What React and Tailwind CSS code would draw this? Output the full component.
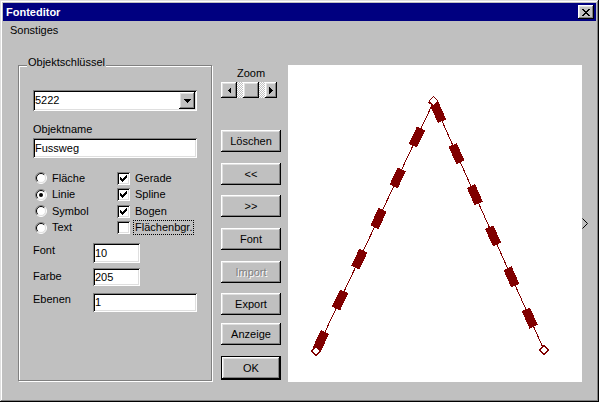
const FONT = "[font-family:'Liberation_Sans',Arial,sans-serif] text-[11px] leading-[13px] text-black";
const RAISED = "shadow-[inset_-1px_-1px_#000,inset_1px_1px_#fff,inset_-2px_-2px_#808080,inset_2px_2px_#dfdfdf]";
const SUNKEN = "shadow-[inset_1px_1px_#808080,inset_-1px_-1px_#fff,inset_2px_2px_#000,inset_-2px_-2px_#dfdfdf]";
const CHECKER = "[background-image:repeating-conic-gradient(#fff_0_25%,#c0c0c0_0_50%)] [background-size:2px_2px]";

const X_ROWS = ['XX....XX', '.XX..XX.', '..XXXX..', '...XX...', '..XXXX..', '.XX..XX.', 'XX....XX'];

function CloseGlyph() {
  return (
    <svg width="8" height="7" viewBox="0 0 8 7" shapeRendering="crispEdges">
      {X_ROWS.flatMap((row, y) =>
        row.split('').map((c, x) => (c === 'X' ? <rect key={`${x}-${y}`} x={x} y={y} width="1" height="1" fill="#000" /> : null))
      )}
    </svg>
  );
}

function TitleBar() {
  return (
    <div className="h-[18px] bg-[#000080] flex items-center justify-between pl-[3px] pr-[2px]">
      <span className="font-bold text-white">Fonteditor</span>
      <div className={`w-[16px] h-[14px] bg-[#c0c0c0] ${RAISED} flex items-center justify-center`}>
        <CloseGlyph />
      </div>
    </div>
  );
}

function Radio({ checked }) {
  return (
    <svg width="12" height="12" viewBox="0 0 12 12" className="shrink-0">
      <circle cx="6" cy="6" r="5" fill="#fff" />
      <path d="M9.9 2.1A5.5 5.5 0 0 0 2.1 9.9" fill="none" stroke="#808080" />
      <path d="M9.9 2.1A5.5 5.5 0 0 1 2.1 9.9" fill="none" stroke="#fff" />
      <path d="M9.2 2.8A4.5 4.5 0 0 0 2.8 9.2" fill="none" stroke="#000" />
      <path d="M9.2 2.8A4.5 4.5 0 0 1 2.8 9.2" fill="none" stroke="#dfdfdf" />
      {checked && <circle cx="6" cy="6" r="2" fill="#000" />}
    </svg>
  );
}

const CHECK_Y = [2, 3, 4, 3, 2, 1, 0];

function Checkbox({ checked }) {
  return (
    <div className={`w-[13px] h-[13px] shrink-0 bg-white ${SUNKEN} flex items-center justify-center`}>
      {checked && (
        <svg width="7" height="7" viewBox="0 0 7 7" shapeRendering="crispEdges">
          {CHECK_Y.map((y, x) => (
            <rect key={x} x={x} y={y} width="1" height="3" fill="#000" />
          ))}
        </svg>
      )}
    </div>
  );
}

const RADIOS = [
  { label: 'Fläche', on: false },
  { label: 'Linie', on: true },
  { label: 'Symbol', on: false },
  { label: 'Text', on: false },
];
const CHECKS = [
  { label: 'Gerade', on: true },
  { label: 'Spline', on: true },
  { label: 'Bogen', on: true },
  { label: 'Flächenbgr.', on: false, focus: true },
];

function GroupBox() {
  return (
    <div className="relative ml-[15px] w-[194px] h-[316px] border border-[#808080] shadow-[inset_1px_1px_#fff,1px_1px_#fff] pl-[14px] pt-[24px] flex flex-col">
      <span className="absolute left-[8px] top-[-10px] px-[1px] bg-[#c0c0c0]">Objektschlüssel</span>

      {/* Combobox */}
      <div className={`w-[164px] h-[21px] bg-white ${SUNKEN} flex items-center justify-between pl-[2px] pr-[2px]`}>
        <span>5222</span>
        <div className={`w-[16px] h-[17px] bg-[#c0c0c0] ${RAISED} flex items-center justify-center`}>
          <svg width="7" height="4" viewBox="0 0 7 4" shapeRendering="crispEdges">
            <rect x="0" y="0" width="7" height="1" fill="#000" />
            <rect x="1" y="1" width="5" height="1" fill="#000" />
            <rect x="2" y="2" width="3" height="1" fill="#000" />
            <rect x="3" y="3" width="1" height="1" fill="#000" />
          </svg>
        </div>
      </div>

      <div className="mt-[12px]">Objektname</div>
      <div className={`mt-[2px] w-[164px] h-[20px] bg-white ${SUNKEN} flex items-center pl-[2px]`}>Fussweg</div>

      <div className="mt-[12px] grid grid-cols-[84px_auto] auto-rows-[16.5px]">
        {RADIOS.map((r, i) => [
          <div key={`r${i}`} className="flex items-center gap-[5px] pl-[2px]">
            <Radio checked={r.on} />
            <span>{r.label}</span>
          </div>,
          <div key={`c${i}`} className="flex items-center gap-[3px]">
            <Checkbox checked={CHECKS[i].on} />
            <span className={`px-[1px] border ${CHECKS[i].focus ? 'border-dotted border-black' : 'border-transparent'}`}>
              {CHECKS[i].label}
            </span>
          </div>,
        ])}
      </div>

      <div className="mt-[7px] flex items-start">
        <span className="w-[60px] mt-[1px]">Font</span>
        <div className={`w-[47px] h-[20px] bg-white ${SUNKEN} flex items-center pl-[2px]`}>10</div>
      </div>
      <div className="mt-[5px] flex items-start">
        <span className="w-[60px] mt-[2px]">Farbe</span>
        <div className={`w-[47px] h-[18px] bg-white ${SUNKEN} flex items-center pl-[2px]`}>205</div>
      </div>
      <div className="mt-[7px] flex items-start">
        <span className="w-[60px]">Ebenen</span>
        <div className={`w-[104px] h-[19px] bg-white ${SUNKEN} flex items-center pl-[2px]`}>1</div>
      </div>
    </div>
  );
}

const BUTTONS = [
  { label: 'Löschen', cls: 'mt-[32px]' },
  { label: '<<', cls: 'mt-[11px]' },
  { label: '>>', cls: 'mt-[10px]' },
  { label: 'Font', cls: 'mt-[11px]' },
  { label: 'Import', cls: 'mt-[11px]', disabled: true },
  { label: 'Export', cls: 'mt-[10px]' },
  { label: 'Anzeige', cls: 'mt-[8px]' },
];

function ButtonColumn() {
  return (
    <div className="ml-[9px] w-[60px] flex flex-col pt-[2px]">
      <div className="text-center">Zoom</div>
      <div className="mt-[2px] w-[56px] h-[16px] flex">
        <div className={`w-[16px] h-[16px] ${RAISED} flex items-center justify-center`}>
          <svg width="4" height="7" viewBox="0 0 4 7" shapeRendering="crispEdges">
            <polygon points="4,0 4,7 0.5,3.5" fill="#000" />
          </svg>
        </div>
        <div className={`w-[6px] h-[16px] ${CHECKER}`} />
        <div className={`w-[16px] h-[16px] ${RAISED}`} />
        <div className={`w-[6px] h-[16px] ${CHECKER}`} />
        <div className={`w-[12px] h-[16px] ${RAISED} flex items-center justify-center`}>
          <svg width="4" height="7" viewBox="0 0 4 7" shapeRendering="crispEdges">
            <polygon points="0,0 0,7 3.5,3.5" fill="#000" />
          </svg>
        </div>
      </div>
      {BUTTONS.map((b) => (
        <div key={b.label} className={`${b.cls} h-[22px] ${RAISED} flex items-center justify-center`}>
          <span className={b.disabled ? 'text-[#808080] [text-shadow:1px_1px_0_#fff]' : ''}>{b.label}</span>
        </div>
      ))}
      <div className="mt-[11px] h-[24px] border border-black">
        <div className={`h-full ${RAISED} flex items-center justify-center`}>OK</div>
      </div>
    </div>
  );
}

function Diamond({ x, y }) {
  const d = 4.5;
  return (
    <polygon
      points={`${x},${y - d} ${x + d},${y} ${x},${y + d} ${x - d},${y}`}
      fill="#fff"
      stroke="#800000"
      strokeWidth="1"
    />
  );
}

function Drawing() {
  const apex = [145.5, 37];
  const left = [28, 286];
  const right = [256, 285];
  return (
    <svg width="294" height="317" viewBox="0 0 294 317" shapeRendering="crispEdges">
      <line x1={left[0]} y1={left[1]} x2={apex[0]} y2={apex[1]} stroke="#800000" strokeWidth="1" />
      <line x1={apex[0]} y1={apex[1]} x2={right[0]} y2={right[1]} stroke="#800000" strokeWidth="1" />
      <line x1={left[0]} y1={left[1]} x2={apex[0]} y2={apex[1]} stroke="#800000" strokeWidth="9" strokeDasharray="19 26" strokeDashoffset="43" />
      <line x1={apex[0]} y1={apex[1]} x2={right[0]} y2={right[1]} stroke="#800000" strokeWidth="9" strokeDasharray="19 26" strokeDashoffset="43" />
      <Diamond x={apex[0]} y={apex[1] - 1} />
      <Diamond x={left[0]} y={left[1]} />
      <Diamond x={right[0]} y={right[1]} />
    </svg>
  );
}

export default function App() {
  return (
    <div className={`w-[599px] h-[402px] bg-[#c0c0c0] p-[3px] flex flex-col ${FONT} shadow-[inset_-1px_-1px_#000,inset_1px_1px_#dfdfdf,inset_-2px_-2px_#808080,inset_2px_2px_#fff]`}>
      <TitleBar />
      <div className="h-[19px] pl-[7px] pt-[3px]">Sonstiges</div>
      <div className="flex mt-[25px]">
        <GroupBox />
        <ButtonColumn />
        <div className="ml-[7px] w-[294px] h-[317px] bg-white">
          <Drawing />
        </div>
        <div className="flex-1 flex items-center">
          <svg width="7" height="11" viewBox="0 0 7 11">
            <polyline points="0.5,0.5 5.5,5.5 0.5,10.5" fill="none" stroke="#000" strokeWidth="1" />
          </svg>
        </div>
      </div>
    </div>
  );
}
